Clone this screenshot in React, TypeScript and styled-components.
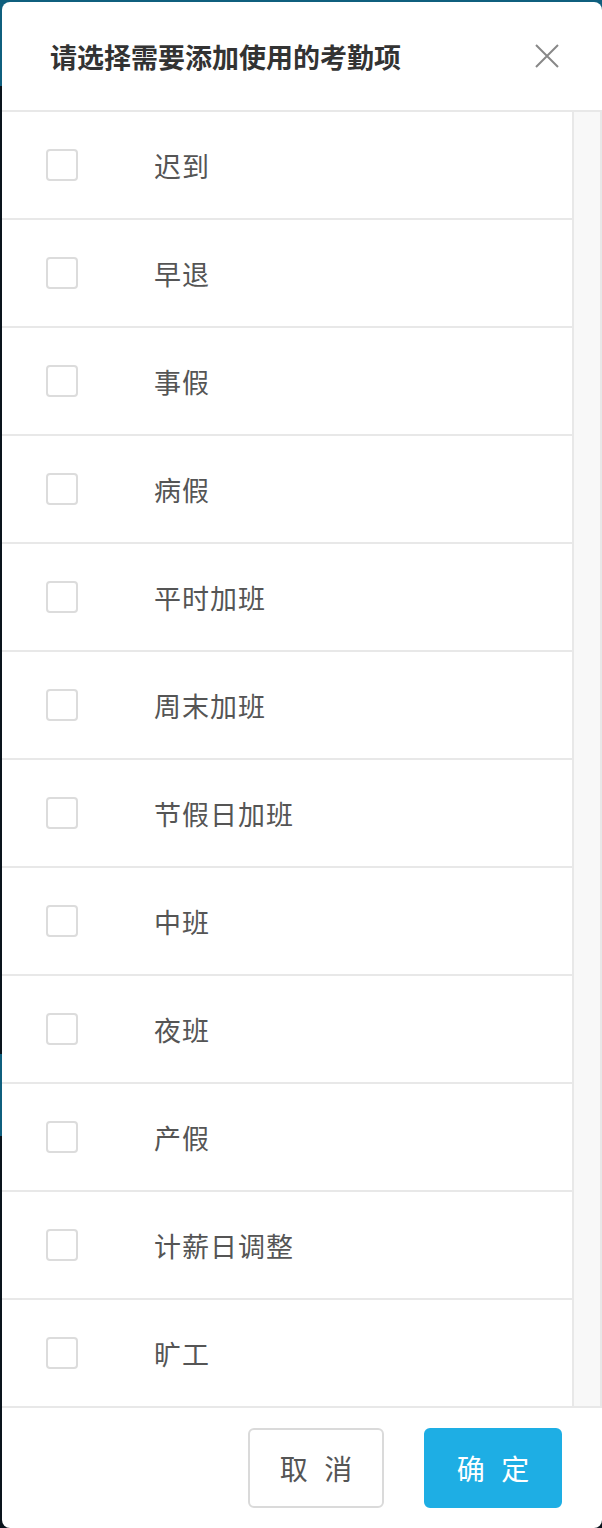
import styled, { createGlobalStyle } from 'styled-components';

const GlobalStyle = createGlobalStyle`
  html, body {
    margin: 0;
    padding: 0;
  }
  body {
    height: 1528px;
    overflow: hidden;
    font-family: 'Noto Sans CJK SC', 'Noto Sans', sans-serif;
    background: linear-gradient(
      to bottom,
      #0f5f7e 0 86px,
      #0a141c 86px 1054px,
      #0f5f7e 1054px 1136px,
      #0a141c 1136px
    );
  }
`;

const Modal = styled.div`
  margin: 2px 0 0 2px;
  width: 600px;
  height: 1526px;
  background: #fff;
  border-radius: 8px;
  overflow: hidden;
  display: flex;
  flex-direction: column;
  box-sizing: border-box;
`;

const Header = styled.div`
  height: 108px;
  border-bottom: 2px solid #e8e8e8;
  display: flex;
  align-items: center;
  justify-content: space-between;
  padding: 0 42px 0 48px;
  flex-shrink: 0;
`;

const Title = styled.h2`
  margin: 0;
  font-size: 27px;
  font-weight: 700;
  color: #333;
  line-height: 1;
`;

const CloseButton = styled.button`
  border: none;
  background: none;
  padding: 0;
  width: 26px;
  height: 26px;
  display: flex;
  align-items: center;
  justify-content: center;
  cursor: pointer;
`;

const Body = styled.div`
  display: flex;
  flex-shrink: 0;
`;

const List = styled.div`
  flex: 1;
  display: flex;
  flex-direction: column;
`;

const Row = styled.label`
  height: 106px;
  flex-shrink: 0;
  border-bottom: 2px solid #e8e8e8;
  display: grid;
  grid-template-columns: 108px 1fr;
  align-items: center;
  padding-left: 44px;
  cursor: pointer;
`;

const Checkbox = styled.input`
  appearance: none;
  margin: 0;
  width: 32px;
  height: 32px;
  border: 2px solid #dcdcdc;
  border-radius: 4px;
  background: #fff;
  box-sizing: border-box;
`;

const ItemName = styled.span`
  font-size: 27px;
  color: #555;
  letter-spacing: 1px;
`;

const ScrollTrack = styled.div`
  width: 26px;
  background: #f8f8f8;
  border-left: 2px solid #e8e8e8;
  border-right: 2px solid #e8e8e8;
  border-bottom: 2px solid #e8e8e8;
`;

const Footer = styled.div`
  flex: 1;
  display: flex;
  justify-content: flex-end;
  align-items: flex-start;
  gap: 40px;
  padding: 20px 40px 0 0;
`;

const Button = styled.button<{ $primary?: boolean }>`
  height: 80px;
  width: ${({ $primary }) => ($primary ? '138px' : '136px')};
  border-radius: 6px;
  border: 2px solid ${({ $primary }) => ($primary ? '#1eaee4' : '#dadada')};
  background: ${({ $primary }) => ($primary ? '#1eaee4' : '#fff')};
  color: ${({ $primary }) => ($primary ? '#fff' : '#555')};
  font-family: 'Noto Sans CJK SC', 'Noto Sans', sans-serif;
  font-size: 28px;
  letter-spacing: 5px;
  cursor: pointer;
  padding: 0 0 0 5px;
`;

const items = [
  '迟到',
  '早退',
  '事假',
  '病假',
  '平时加班',
  '周末加班',
  '节假日加班',
  '中班',
  '夜班',
  '产假',
  '计薪日调整',
  '旷工',
];

export default function App() {
  return (
    <>
      <GlobalStyle />
      <Modal>
        <Header>
          <Title>请选择需要添加使用的考勤项</Title>
          <CloseButton aria-label="关闭">
            <svg width="24" height="24" viewBox="0 0 24 24">
              <path d="M1 1 L23 23 M23 1 L1 23" stroke="#888" strokeWidth="2" fill="none" />
            </svg>
          </CloseButton>
        </Header>
        <Body>
          <List>
            {items.map((name) => (
              <Row key={name}>
                <Checkbox type="checkbox" />
                <ItemName>{name}</ItemName>
              </Row>
            ))}
          </List>
          <ScrollTrack />
        </Body>
        <Footer>
          <Button>取 消</Button>
          <Button $primary>确 定</Button>
        </Footer>
      </Modal>
    </>
  );
}
